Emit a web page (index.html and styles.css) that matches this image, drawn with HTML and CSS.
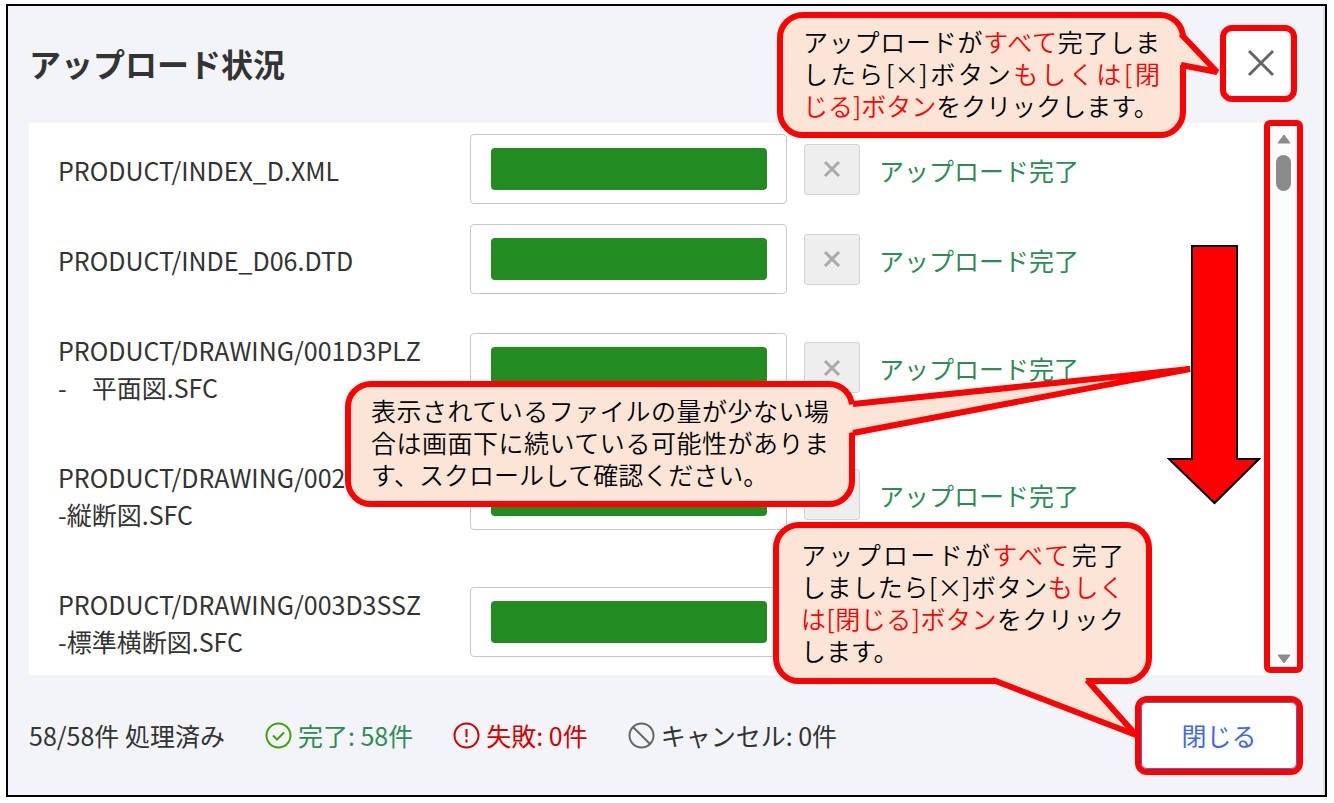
FILE: index.html
```html
<!DOCTYPE html>
<html lang="ja">
    <head>
        <meta charset="UTF-8">
        <meta name="viewport" content="width=device-width, initial-scale=1.0">
        <title>アップロード状況</title>
        <link rel="stylesheet" href="styles.css">
    </head>
    <body>
        <main class="dialog">
            <header class="dialog-header">
                <h1>アップロード状況</h1>
                <button type="button" class="icon-close marked" aria-label="閉じる">
                    <svg width="28" height="28" viewBox="0 0 28 28"><path d="M2 2L26 26M26 2L2 26"/></svg>
                </button>
            </header>

            <section class="list">
                <div class="list-body">
                    <table class="files">
                        <tr>
                            <td class="name">PRODUCT/INDEX_D.XML</td>
                            <td class="bar"><div class="bar-box"><progress value="100" max="100" aria-label="INDEX_D.XML"></progress></div></td>
                            <td class="cancel"><button type="button" disabled aria-label="キャンセル"><svg width="18" height="18" viewBox="0 0 18 18"><path d="M2 2L16 16M16 2L2 16"/></svg></button></td>
                            <td class="status">アップロード完了</td>
                        </tr>
                        <tr>
                            <td class="name">PRODUCT/INDE_D06.DTD</td>
                            <td class="bar"><div class="bar-box"><progress value="100" max="100" aria-label="INDE_D06.DTD"></progress></div></td>
                            <td class="cancel"><button type="button" disabled aria-label="キャンセル"><svg width="18" height="18" viewBox="0 0 18 18"><path d="M2 2L16 16M16 2L2 16"/></svg></button></td>
                            <td class="status">アップロード完了</td>
                        </tr>
                        <tr>
                            <td class="name">PRODUCT/DRAWING/001D3PLZ<br>-　平面図.SFC</td>
                            <td class="bar"><div class="bar-box"><progress value="100" max="100" aria-label="001D3PLZ"></progress></div></td>
                            <td class="cancel"><button type="button" disabled aria-label="キャンセル"><svg width="18" height="18" viewBox="0 0 18 18"><path d="M2 2L16 16M16 2L2 16"/></svg></button></td>
                            <td class="status">アップロード完了</td>
                        </tr>
                        <tr>
                            <td class="name">PRODUCT/DRAWING/002<br>-縦断図.SFC</td>
                            <td class="bar"><div class="bar-box"><progress value="100" max="100" aria-label="002"></progress></div></td>
                            <td class="cancel"><button type="button" disabled aria-label="キャンセル"><svg width="18" height="18" viewBox="0 0 18 18"><path d="M2 2L16 16M16 2L2 16"/></svg></button></td>
                            <td class="status">アップロード完了</td>
                        </tr>
                        <tr>
                            <td class="name">PRODUCT/DRAWING/003D3SSZ<br>-標準横断図.SFC</td>
                            <td class="bar"><div class="bar-box"><progress value="100" max="100" aria-label="003D3SSZ"></progress></div></td>
                            <td class="cancel"></td>
                            <td class="status"></td>
                        </tr>
                    </table>
                </div>
                <div class="scrollbar">
                    <svg width="14" height="10" viewBox="0 0 14 10"><path d="M7 1L13 9H1Z"/></svg>
                    <div class="thumb"></div>
                    <svg class="down" width="14" height="10" viewBox="0 0 14 10"><path d="M1 1H13L7 9Z"/></svg>
                </div>
            </section>

            <footer class="dialog-footer">
                <span>58/58件 処理済み</span>
                <span class="count done">
                    <svg width="27" height="27" viewBox="0 0 27 27"><circle cx="13.5" cy="13.5" r="12"/><path d="M8 13.5L12 17.5L19 10.5"/></svg>
                    完了: 58件
                </span>
                <span class="count failed">
                    <svg width="27" height="27" viewBox="0 0 27 27"><circle cx="13.5" cy="13.5" r="12"/><path d="M13.5 7V15M13.5 17.5V20.5"/></svg>
                    失敗: 0件
                </span>
                <span class="count cancelled">
                    <svg width="27" height="27" viewBox="0 0 27 27"><circle cx="13.5" cy="13.5" r="12"/><path d="M5 5L22 22"/></svg>
                    キャンセル: 0件
                </span>
                <button type="button" class="close-btn marked">閉じる</button>
            </footer>
        </main>

        <!-- Notes over the dialog -->
        <svg class="arrow" width="94" height="262" viewBox="0 0 94 262"><path d="M25 2H70V215H92L47.500 259L2 215H25Z"/></svg>

        <div class="callout note-top">
            <svg class="tail" width="50" height="60" viewBox="0 0 50 60">
                <path class="tail-fill" d="M0 10L6 12L42 49L6 41H0Z"/>
                <path class="tail-line" d="M6 10L42 48L6 41"/>
            </svg>
            <p>アップロードが<em>すべて</em>完了しま<br>したら[×]ボタン<em>もしくは[閉</em><span class="last"><em>じる]ボタン</em>をクリックします。</span></p>
        </div>

        <div class="callout note-list">
            <svg class="tail" width="350" height="80" viewBox="0 0 350 80">
                <path class="tail-fill" d="M0 44L6 43L340 8L6 71L0 72Z"/>
                <path class="tail-line" d="M5 43L342 8L5 72"/>
            </svg>
            <p>表示されているファイルの量が少ない場<br>合は画面下に続いている可能性がありま<span class="last">す、スクロールして確認ください。</span></p>
        </div>

        <div class="callout note-close">
            <svg class="tail" width="160" height="70" viewBox="0 0 160 70">
                <path class="tail-fill" d="M5 0L12 7L150 61L101 7L97 0Z"/>
                <path class="tail-line" d="M7 6L150 61L101 6"/>
            </svg>
            <p>アップロードが<em>すべて</em>完了<br>しましたら[×]ボタン<em>もしく</em><br><em>は[閉じる]ボタン</em>をクリック<span class="last">します。</span></p>
        </div>
    </body>
</html>
```

FILE: styles.css
```css
/* General Styles */
* {
    box-sizing: border-box;
}

body {
    margin: 0;
    padding: 4px 7px 6px 6px;
    height: 100vh;
    position: relative;
    overflow: hidden;
    background-color: white;
    color: #333;
    font-family: "Noto Sans CJK JP", sans-serif;
    font-size: 25px;
    line-height: 37px;
}

button {
    font: inherit;
    padding: 0;
    display: flex;
    align-items: center;
    justify-content: center;
}

/* Dialog */
.dialog {
    height: 100%;
    display: flex;
    flex-direction: column;
    padding: 0 22px 0 21px;
    border: 2px solid black;
    background-color: #f2f4f8;
    box-shadow: inset -2px 0 #dcdee2;
}

.dialog-header {
    height: 117px;
    flex: none;
    display: flex;
    align-items: center;
    justify-content: space-between;
    padding: 0 12px 2px 0;
}

h1 {
    margin: 0;
    font-size: 32px;
    font-weight: bold;
}

.marked {
    outline: 6px solid red;
    background-color: white;
}

.icon-close {
    width: 65px;
    height: 65px;
    padding: 0 0 2px 4px;
    border: none;
    border-radius: 6px;
}

.icon-close path {
    stroke: #666;
    stroke-width: 3;
}

/* File list */
.list {
    flex: 1;
    min-height: 0;
    display: flex;
    background-color: white;
}

.list-body {
    flex: 1;
    overflow: hidden;
    padding: 1px 0 0 29px;
}

.files {
    border-collapse: collapse;
}

.files td {
    padding: 0;
    vertical-align: middle;
    white-space: nowrap;
}

.files .name {
    width: 412px;
    padding: 28px 0 25px;
}

.files .bar {
    width: 334px;
}

.bar-box {
    width: 317px;
    height: 70px;
    padding: 13px 19px 13px 20px;
    border: 1px solid #c8c8c8;
    border-radius: 4px;
}

progress {
    display: block;
    width: 100%;
    height: 42px;
    appearance: none;
    border: none;
}

progress::-webkit-progress-bar {
    background-color: white;
}

progress::-webkit-progress-value {
    background-color: #228b22;
    border-radius: 4px;
}

.files .cancel {
    width: 75px;
}

.cancel button {
    width: 56px;
    height: 51px;
    border: 1px solid #d3d3d3;
    border-radius: 3px;
    background-color: #eee;
}

.cancel path {
    stroke: #aaa;
    stroke-width: 3;
}

.files .status {
    color: #2e8b57;
    padding-top: 2px;
}

/* Scrollbar */
.scrollbar {
    width: 39px;
    margin: -3px 0 2px;
    padding: 8px 0 3px;
    display: flex;
    flex-direction: column;
    align-items: center;
    gap: 11px;
    border: 6px solid red;
    border-radius: 6px;
    background-color: #fcfcfc;
}

.scrollbar svg {
    fill: #8b8b8b;
    stroke: #8b8b8b;
    stroke-linejoin: round;
    flex: none;
}

.scrollbar .down {
    margin-top: auto;
}

.thumb {
    width: 15px;
    height: 36px;
    border-radius: 8px;
    background-color: #8b8b8b;
}

/* Footer */
.dialog-footer {
    height: 120px;
    flex: none;
    display: flex;
    align-items: center;
    gap: 40px;
    padding-right: 6px;
}

.count {
    display: flex;
    align-items: center;
    gap: 6px;
}

.count svg {
    fill: none;
    stroke-width: 2;
}

.done {
    color: #2e8b57;
}

.done svg {
    stroke: #43a010;
}

.failed {
    color: #c00;
}

.failed svg {
    stroke: #c00;
}

.cancelled svg {
    stroke: #666;
}

.close-btn {
    width: 156px;
    height: 67px;
    margin-left: auto;
    border: 1px solid #4169e1;
    border-radius: 6px;
    color: #4169e1;
}

/* Notes */
.arrow {
    position: absolute;
    top: 244px;
    right: 73px;
    fill: red;
    stroke: black;
    stroke-width: 2;
}

.callout {
    position: absolute;
    padding: 7px 20px 11px;
    border: 6px solid red;
    border-radius: 26px;
    background-color: #fbe5d6;
    color: black;
    font-size: 25px;
    font-weight: 350;
    line-height: 32px;
}

.callout p {
    margin: 0;
    text-align: justify;
    text-align-last: justify;
}

.callout em {
    color: red;
    font-style: normal;
}

.callout .last {
    display: block;
    text-align-last: left;
    white-space: nowrap;
}

.tail {
    position: absolute;
}

.tail-fill {
    fill: #fbe5d6;
}

.tail-line {
    fill: none;
    stroke: red;
    stroke-width: 6;
    stroke-linejoin: bevel;
}

.note-top {
    top: 12px;
    right: 148px;
    width: 409px;
}

.note-top .tail {
    top: 6px;
    right: -45px;
}

.note-list {
    top: 381px;
    right: 479px;
    width: 510px;
}

.note-list .tail {
    top: -26px;
    right: -349px;
}

.note-close {
    top: 522px;
    right: 182px;
    width: 379px;
    padding: 10px 22px 12px;
}

.note-close .tail {
    bottom: -66px;
    right: 0;
}
```
